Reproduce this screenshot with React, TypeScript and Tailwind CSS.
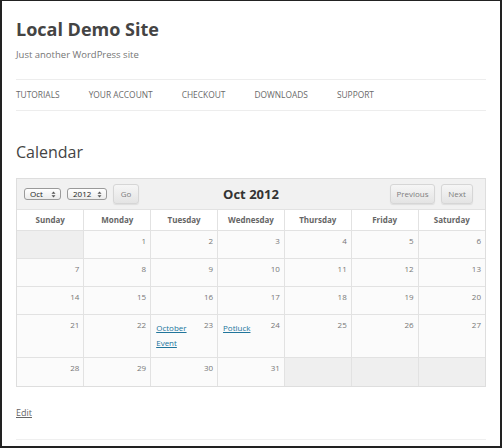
import React from 'react';

type Day = { n?: number; events?: string[] };

const weeks: Day[][] = [
  [{}, { n: 1 }, { n: 2 }, { n: 3 }, { n: 4 }, { n: 5 }, { n: 6 }],
  [{ n: 7 }, { n: 8 }, { n: 9 }, { n: 10 }, { n: 11 }, { n: 12 }, { n: 13 }],
  [{ n: 14 }, { n: 15 }, { n: 16 }, { n: 17 }, { n: 18 }, { n: 19 }, { n: 20 }],
  [
    { n: 21 },
    { n: 22 },
    { n: 23, events: ['October Event'] },
    { n: 24, events: ['Potluck'] },
    { n: 25 },
    { n: 26 },
    { n: 27 },
  ],
  [{ n: 28 }, { n: 29 }, { n: 30 }, { n: 31 }, {}, {}, {}],
];

const dayNames = ['Sunday', 'Monday', 'Tuesday', 'Wednesday', 'Thursday', 'Friday', 'Saturday'];
const nav = ['Tutorials', 'Your Account', 'Checkout', 'Downloads', 'Support'];

function UpDown() {
  return (
    <svg width="5" height="7" viewBox="0 0 5 7" aria-hidden className="text-[#555]">
      <path d="M2.5 0.5 4.5 2.8H0.5Z M2.5 6.5 4.5 4.2H0.5Z" fill="currentColor" />
    </svg>
  );
}

function FakeSelect({ label, width }: { label: string; width: string }) {
  return (
    <div
      className={`flex h-[12px] ${width} items-center justify-between rounded-[3px] border border-[#9a9a9a] bg-gradient-to-b from-white to-[#ececec] pl-[5px] pr-[4px] text-[8px] leading-none text-[#222]`}
    >
      <span>{label}</span>
      <UpDown />
    </div>
  );
}

function Btn({ children, className = '' }: { children: React.ReactNode; className?: string }) {
  return (
    <div
      className={`flex h-[20px] items-center justify-center rounded-[3px] border border-[#d6d6d6] bg-gradient-to-b from-[#f6f6f6] to-[#e4e4e4] text-[8px] text-[#7e7e7e] shadow-[0_1px_1px_rgba(0,0,0,0.08)] ${className}`}
    >
      {children}
    </div>
  );
}

export default function App() {
  return (
    <div className="h-[448px] w-[502px] overflow-hidden border-b-2 border-l-2 border-r-2 border-t border-[#222] bg-white px-[14px] font-['Open_Sans',sans-serif] text-[#444]">
      <h1 className="mt-[16px] text-[18px] font-bold leading-[24px] text-[#444]">Local Demo Site</h1>
      <p className="mt-[7px] text-[9.5px] leading-[14px] text-[#757575]">Just another WordPress site</p>

      <nav className="mt-[17px] flex h-[32px] items-center gap-[29px] border-y border-[#ededed] text-[8.4px] uppercase text-[#6a6a6a]">
        {nav.map((n) => (
          <span key={n}>{n}</span>
        ))}
      </nav>

      <h2 className="mt-[31px] text-[16px] leading-[20px] text-[#444]">Calendar</h2>

      <div className="mt-[16px] border border-[#dedede]">
        <div className="grid h-[30px] grid-cols-[1fr_auto_1fr] items-center bg-[#f1f1f1] px-[7px]">
          <div className="flex items-center gap-[6px]">
            <FakeSelect label="Oct" width="w-[37px]" />
            <FakeSelect label="2012" width="w-[40px]" />
            <Btn className="w-[26px]">Go</Btn>
          </div>
          <div className="text-[13px] font-bold leading-none text-[#333]">Oct 2012</div>
          <div className="flex items-center justify-end gap-[6px] pr-[5px]">
            <Btn className="w-[45px]">Previous</Btn>
            <Btn className="w-[32px]">Next</Btn>
          </div>
        </div>

        <table className="w-full table-fixed border-collapse">
          <thead>
            <tr>
              {dayNames.map((d) => (
                <th
                  key={d}
                  className="h-[21px] border border-[#e2e2e2] bg-white text-center text-[8px] font-bold text-[#666] first:border-l-0 last:border-r-0"
                >
                  {d}
                </th>
              ))}
            </tr>
          </thead>
          <tbody>
            {weeks.map((w, i) => (
              <tr key={i}>
                {w.map((d, j) => (
                  <td
                    key={j}
                    className={`h-[28px] border border-[#e2e2e2] align-top first:border-l-0 last:border-r-0 ${
                      d.n ? 'bg-[#fbfbfb]' : 'bg-[#efefef]'
                    } ${i === weeks.length - 1 ? 'border-b-0' : ''}`}
                  >
                    {d.n && (
                      <div className="flex justify-between pl-[5px] pr-[4px] pt-[4px] text-[8px]">
                        {d.events ? (
                          <div className="max-w-[44px] pb-[7px] pt-[1px] leading-[15px]">
                            {d.events.map((e) => (
                              <a key={e} href="#" className="text-[#21759b] underline">
                                {e}
                              </a>
                            ))}
                          </div>
                        ) : (
                          <span />
                        )}
                        <span className="leading-[12px] text-[#777]">{d.n}</span>
                      </div>
                    )}
                  </td>
                ))}
              </tr>
            ))}
          </tbody>
        </table>
      </div>

      <a href="#" className="mt-[19px] inline-block text-[9px] leading-[14px] text-[#666] underline">
        Edit
      </a>
      <div className="mt-[17px] border-t border-[#efefef]" />
    </div>
  );
}
